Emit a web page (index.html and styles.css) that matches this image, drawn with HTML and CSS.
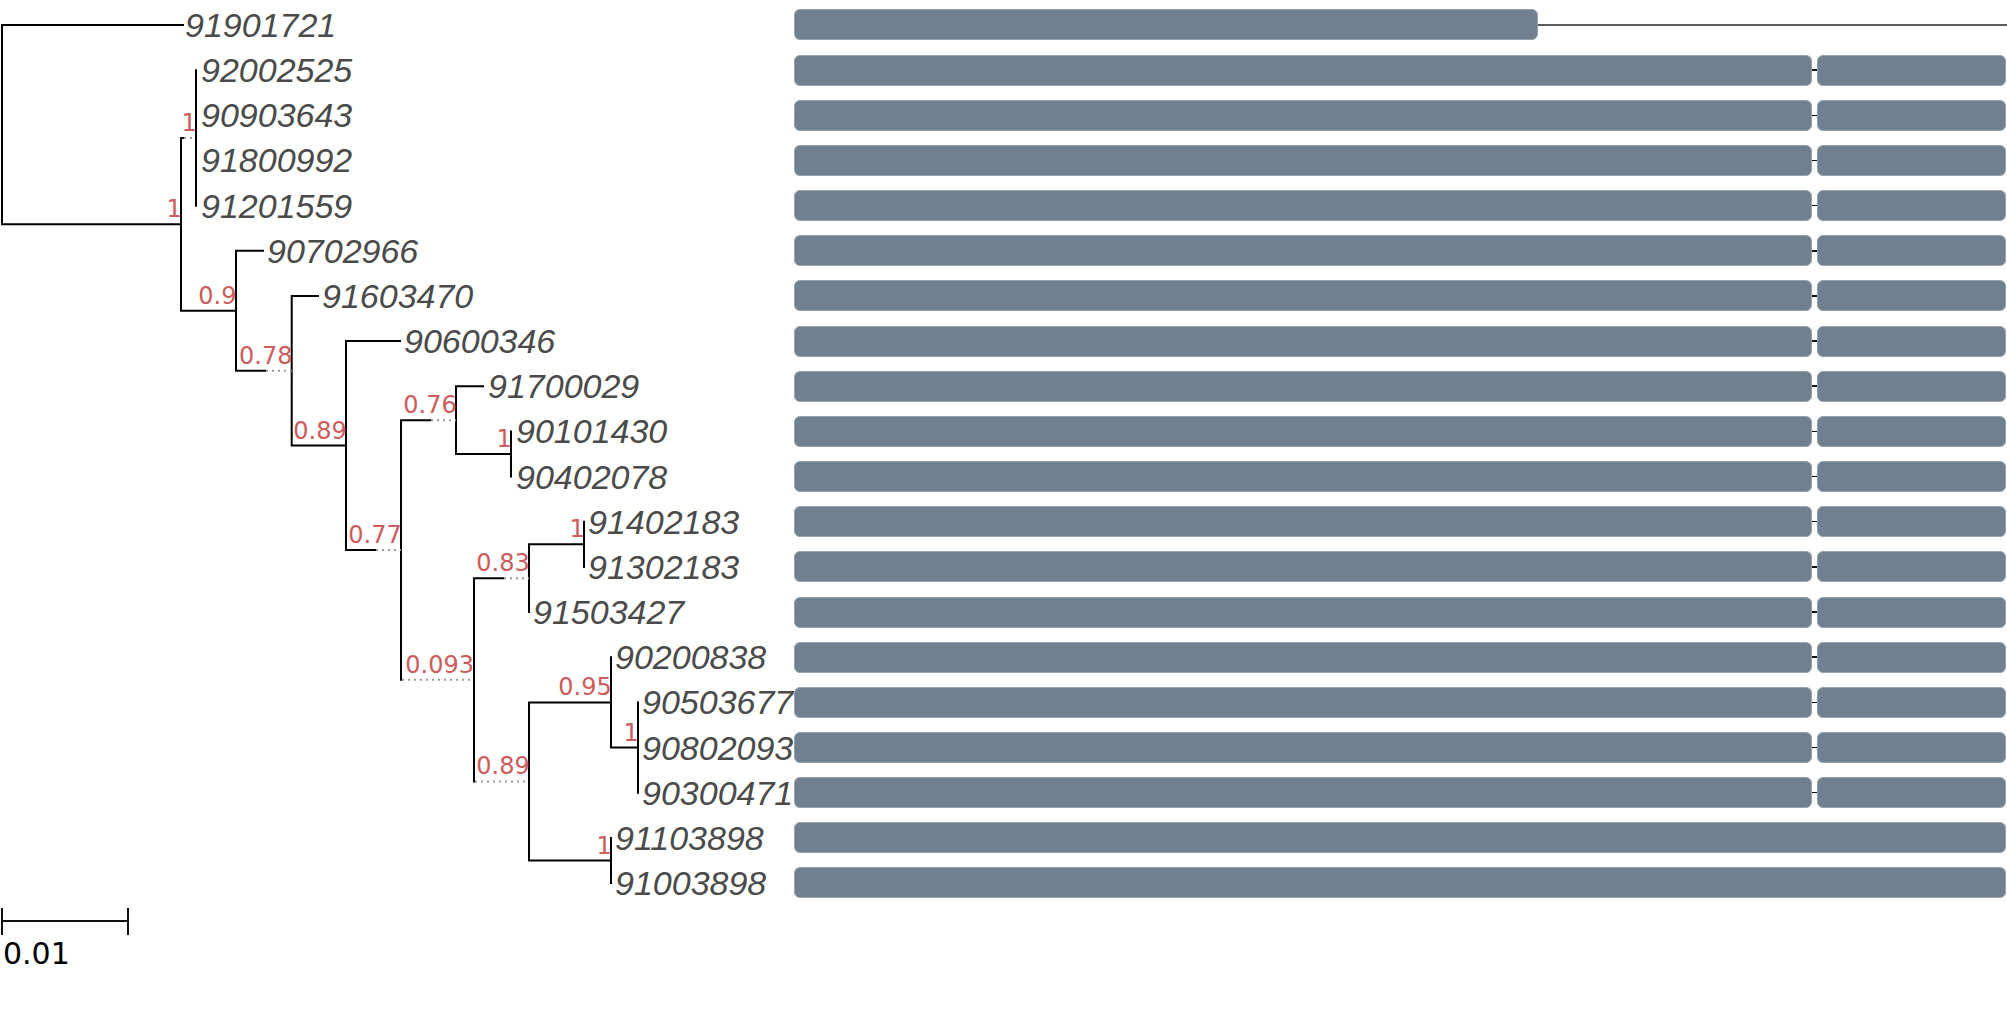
FILE: index.html
```html
<!DOCTYPE html>
<html>
<head>
<meta charset="utf-8">
<title>Tree</title>
<link rel="stylesheet" href="styles.css">
</head>
<body>
<div class="figure">
  <svg class="tree" width="794" height="1034" viewBox="0 0 794 1034">
    <path class="br" d="M2 25H183 M2 25V224.34 M2 224.34H181 M181 137.9V310.78 M181 137.9H183 M196 70.16V205.64 M181 310.78H236 M236 250.8V370.76 M236 250.8H263 M236 370.76H265 M291.7 295.96V445.55 M291.7 295.96H318 M291.7 445.55H346 M346 341.12V549.99 M346 341.12H400 M346 549.99H375 M401 420.15V679.82 M401 420.15H430 M456 386.28V454.02 M456 386.28H483 M456 454.02H511 M511 431.44V476.6 M474 578.21V781.43 M474 578.21H503 M529 544.34V612.08 M529 544.34H584 M584 521.76V566.92 M529 702.4V860.46 M529 702.4H611 M611 657.24V747.56 M611 747.56H638 M638 702.4V792.72 M529 860.46H611 M611 837.88V883.04"/>
    <path class="dot" d="M184 137.9H196 M266 370.76H291.7 M376 549.99H401 M431 420.15H456 M402 679.82H474 M504 578.21H529 M475 781.43H529"/>

    <g class="leaves">
      <text x="185" y="37">91901721</text>
      <text x="201" y="82.16">92002525</text>
      <text x="201" y="127.32">90903643</text>
      <text x="201" y="172.48">91800992</text>
      <text x="201" y="217.64">91201559</text>
      <text x="267" y="262.8">90702966</text>
      <text x="322" y="307.96">91603470</text>
      <text x="404" y="353.12">90600346</text>
      <text x="488" y="398.28">91700029</text>
      <text x="516" y="443.44">90101430</text>
      <text x="516" y="488.6">90402078</text>
      <text x="588" y="533.76">91402183</text>
      <text x="588" y="578.92">91302183</text>
      <text x="533" y="624.08">91503427</text>
      <text x="615" y="669.24">90200838</text>
      <text x="642" y="714.4">90503677</text>
      <text x="642" y="759.56">90802093</text>
      <text x="642" y="804.72">90300471</text>
      <text x="615" y="849.88">91103898</text>
      <text x="615" y="895.04">91003898</text>
    </g>

    <g class="support">
      <text x="196.7" y="130.9">1</text>
      <text x="181.7" y="217.3">1</text>
      <text x="236.5" y="303.8">0.9</text>
      <text x="292.5" y="363.8">0.78</text>
      <text x="346.7" y="438.5">0.89</text>
      <text x="401.7" y="543">0.77</text>
      <text x="456.7" y="413.2">0.76</text>
      <text x="511.7" y="447">1</text>
      <text x="474" y="672.8">0.093</text>
      <text x="529.7" y="571.2">0.83</text>
      <text x="584.7" y="537.3">1</text>
      <text x="529.7" y="774.4">0.89</text>
      <text x="611.7" y="695.4">0.95</text>
      <text x="638.7" y="740.6">1</text>
      <text x="611.7" y="853.5">1</text>
    </g>

    <path class="scale" d="M2 921H128 M2 908V935 M128 908V935"/>
    <text class="scale-label" x="3" y="964">0.01</text>
  </svg>

  <div class="tracks">
    <div class="track"><div class="seg seg-short"></div><div class="tail"></div></div>
    <div class="track"><div class="seg seg-main"></div><div class="link"></div><div class="seg seg-end"></div></div>
    <div class="track"><div class="seg seg-main"></div><div class="link"></div><div class="seg seg-end"></div></div>
    <div class="track"><div class="seg seg-main"></div><div class="link"></div><div class="seg seg-end"></div></div>
    <div class="track"><div class="seg seg-main"></div><div class="link"></div><div class="seg seg-end"></div></div>
    <div class="track"><div class="seg seg-main"></div><div class="link"></div><div class="seg seg-end"></div></div>
    <div class="track"><div class="seg seg-main"></div><div class="link"></div><div class="seg seg-end"></div></div>
    <div class="track"><div class="seg seg-main"></div><div class="link"></div><div class="seg seg-end"></div></div>
    <div class="track"><div class="seg seg-main"></div><div class="link"></div><div class="seg seg-end"></div></div>
    <div class="track"><div class="seg seg-main"></div><div class="link"></div><div class="seg seg-end"></div></div>
    <div class="track"><div class="seg seg-main"></div><div class="link"></div><div class="seg seg-end"></div></div>
    <div class="track"><div class="seg seg-main"></div><div class="link"></div><div class="seg seg-end"></div></div>
    <div class="track"><div class="seg seg-main"></div><div class="link"></div><div class="seg seg-end"></div></div>
    <div class="track"><div class="seg seg-main"></div><div class="link"></div><div class="seg seg-end"></div></div>
    <div class="track"><div class="seg seg-main"></div><div class="link"></div><div class="seg seg-end"></div></div>
    <div class="track"><div class="seg seg-main"></div><div class="link"></div><div class="seg seg-end"></div></div>
    <div class="track"><div class="seg seg-main"></div><div class="link"></div><div class="seg seg-end"></div></div>
    <div class="track"><div class="seg seg-main"></div><div class="link"></div><div class="seg seg-end"></div></div>
    <div class="track"><div class="seg seg-full"></div></div>
    <div class="track"><div class="seg seg-full"></div></div>
  </div>
</div>
</body>
</html>
```
FILE: styles.css
```css
html, body {
  margin: 0;
  padding: 0;
  background: #ffffff;
}

.figure {
  display: flex;
  align-items: flex-start;
  width: 2007px;
  height: 1034px;
  overflow: hidden;
}

.tree {
  flex: none;
  display: block;
  overflow: visible;
}

.br {
  fill: none;
  stroke: #000000;
  stroke-width: 2;
  stroke-linecap: square;
}

.dot {
  fill: none;
  stroke: #9a9a9a;
  stroke-width: 2;
  stroke-dasharray: 2 4;
}

.leaves text {
  font-family: "Liberation Sans", Arial, sans-serif;
  font-style: italic;
  font-size: 34px;
  fill: #4a4a4a;
}

.support text {
  font-family: "DejaVu Sans", sans-serif;
  font-size: 24px;
  fill: #cd5c5c;
  text-anchor: end;
}

.scale {
  fill: none;
  stroke: #111111;
  stroke-width: 2;
}

.scale-label {
  font-family: "DejaVu Sans", sans-serif;
  font-size: 30px;
  fill: #000000;
}

.tracks {
  flex: 1;
  display: flex;
  flex-direction: column;
  padding-top: 2.42px;
  padding-left: 0.3px;
  position: relative;
  z-index: 1;
}

.track {
  height: 45.16px;
  display: flex;
  align-items: center;
}

.seg {
  flex: none;
  height: 31px;
  box-sizing: border-box;
  background: #708090;
  border: 1px solid #97a1ab;
  border-radius: 6px;
}

.seg-short {
  width: 744px;
}

.seg-main {
  width: 1018px;
}

.seg-end {
  width: 189px;
}

.seg-full {
  width: 1211.4px;
}

.tail {
  flex: 1;
  height: 1.5px;
  background: #5a5a5a;
}

.link {
  flex: none;
  width: 4.4px;
  height: 1.5px;
  background: #111111;
}
```
